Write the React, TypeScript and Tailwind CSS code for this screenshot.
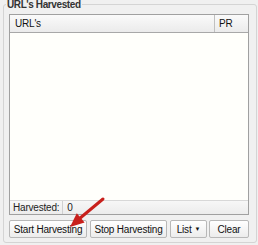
import React from 'react';

const font = { fontFamily: '"Liberation Sans", Arial, sans-serif' };

function Btn({ children, className = '' }: { children: React.ReactNode; className?: string }) {
  return (
    <div
      className={`h-[18px] flex items-center justify-center whitespace-nowrap border border-[#b8b8b8] rounded-[2px] bg-gradient-to-b from-[#ffffff] to-[#ececec] text-[10px] tracking-[-0.2px] text-[#111] ${className}`}
    >
      {children}
    </div>
  );
}

export default function App() {
  return (
    <div className="w-[258px] h-[245px] bg-[#f0f0f0] relative overflow-hidden" style={font}>
      <div className="absolute left-[3px] top-[4px] right-[1px] bottom-[2px] border border-[#d4d4d4] rounded-[3px]" />
      <div className="relative pl-[9px] flex flex-col h-full">
        <div className="h-[14px] flex items-start">
          <span className="ml-[-3px] px-[1px] bg-[#f0f0f0] text-[10px] leading-[11px] -mt-[1px] font-bold tracking-[-0.4px] text-[#333]">URL's Harvested</span>
        </div>
        <div className="w-[240px] h-[201px] border border-[#a0a0a0] flex flex-col bg-white">
          <div className="h-[18px] flex border-b border-[#a8a8a8] bg-gradient-to-b from-[#fafafa] to-[#ebebeb] text-[10px] tracking-[-0.2px] text-[#111]">
            <div className="flex-1 pl-[5px] flex items-center border-r border-[#c0c0c0]">URL's</div>
            <div className="w-[33px] pl-[4px] flex items-center">PR</div>
          </div>
          <div className="flex-1 bg-[#fffffb]" />
          <div className="h-[14px] flex items-center border-t border-[#d8d8d8] bg-gradient-to-b from-[#f7f7f7] to-[#ececec] text-[10px] tracking-[-0.2px] text-[#222]">
            <span className="pl-[3px] pr-[3px] h-full flex items-center border-r border-[#d0d0d0]">Harvested:</span>
            <span className="pl-[4px]">0</span>
          </div>
        </div>
        <div className="mt-[5px] flex w-[240px]">
          <Btn className="w-[78px]">Start Harvesting</Btn>
          <Btn className="w-[77px] ml-[3px]">Stop Harvesting</Btn>
          <Btn className="w-[37px] ml-[3px] gap-[3px]">List <span className="text-[6px]">▼</span></Btn>
          <Btn className="w-[40px] ml-[2px]">Clear</Btn>
        </div>
      </div>
      <svg className="absolute left-0 top-0" width="258" height="245" viewBox="0 0 258 245">
        <line x1="103" y1="199" x2="79" y2="219" stroke="#c8201c" strokeWidth="3" strokeLinecap="round" />
        <polygon points="70,227 76.8,213.3 84.6,222.5" fill="#c8201c" />
      </svg>
    </div>
  );
}
